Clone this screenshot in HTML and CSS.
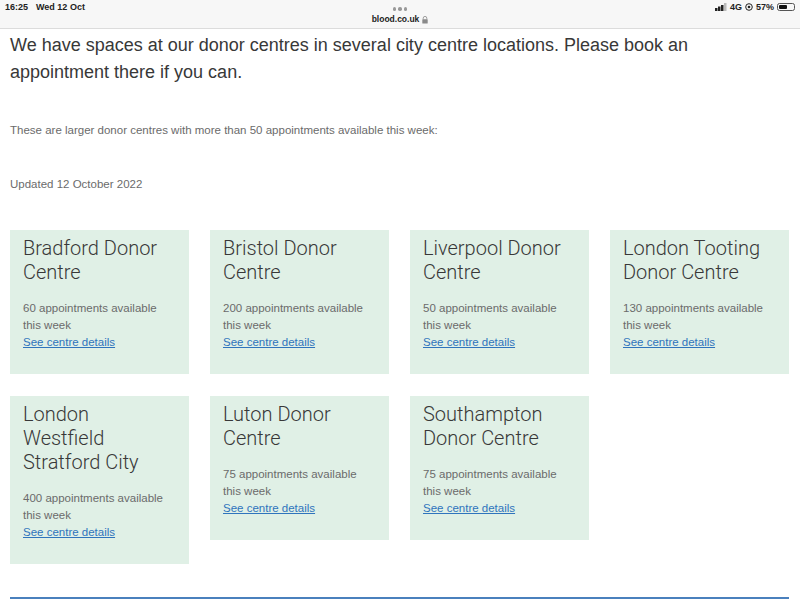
FILE: index.html
```html
<!DOCTYPE html>
<html lang="en">
<head>
<meta charset="utf-8">
<title>Donor centres</title>
<link rel="stylesheet" href="styles.css">
</head>
<body>
<header class="status">
  <div class="time"><span>16:25</span><span>Wed 12 Oct</span></div>
  <div class="address">
    <div class="dots"><i></i><i></i><i></i></div>
    <div class="url">blood.co.uk
      <svg class="lock" width="6" height="8" viewBox="0 0 6 8"><path d="M1.2 3.5V2.2a1.8 1.8 0 0 1 3.6 0v1.3" fill="none" stroke="#8a8a8a" stroke-width=".8"/><rect x=".3" y="3.3" width="5.4" height="4.2" rx=".6" fill="#8a8a8a"/></svg>
    </div>
  </div>
  <div class="system">
    <svg width="12" height="8" viewBox="0 0 12 8"><rect x="0" y="5" width="2.500" height="3" fill="#222"/><rect x="3" y="3.500" width="2.500" height="4.500" fill="#222"/><rect x="6" y="2" width="2.500" height="6" fill="#222"/><rect x="9" y="0" width="2.500" height="8" fill="#bbb"/></svg>
    <span>4G</span>
    <svg width="8" height="8" viewBox="0 0 8 8"><circle cx="4" cy="4" r="3.300" fill="none" stroke="#222"/><circle cx="4" cy="4" r="1.300" fill="#222"/></svg>
    <span>57%</span>
    <span class="battery"><span class="charge"></span></span>
  </div>
</header>
<main class="page">
  <p class="lead">We have spaces at our donor centres in several city centre locations. Please book an appointment there if you can.</p>
  <p class="note first">These are larger donor centres with more than 50 appointments available this week:</p>
  <p class="note second">Updated 12 October 2022</p>
  <section class="grid">
    <article class="card"><h2>Bradford Donor Centre</h2><p>60 appointments available this week<br><a href="#">See centre details</a></p></article>
    <article class="card"><h2>Bristol Donor Centre</h2><p>200 appointments available this week<br><a href="#">See centre details</a></p></article>
    <article class="card"><h2>Liverpool Donor Centre</h2><p>50 appointments available this week<br><a href="#">See centre details</a></p></article>
    <article class="card"><h2>London Tooting Donor Centre</h2><p>130 appointments available this week<br><a href="#">See centre details</a></p></article>
    <article class="card"><h2>London Westfield Stratford City</h2><p>400 appointments available this week<br><a href="#">See centre details</a></p></article>
    <article class="card"><h2>Luton Donor Centre</h2><p>75 appointments available this week<br><a href="#">See centre details</a></p></article>
    <article class="card"><h2>Southampton Donor Centre</h2><p>75 appointments available this week<br><a href="#">See centre details</a></p></article>
  </section>
  <hr class="rule">
</main>
</body>
</html>
```
FILE: styles.css
```css
* { box-sizing: border-box; }
html, body { margin: 0; height: 600px; overflow: hidden; background: #fff; }
body { font-family: "Liberation Sans", Arial, sans-serif; color: #333; }

.status {
  height: 29px;
  display: grid;
  grid-template-columns: 1fr auto 1fr;
  background: #f7f7f7;
  border-bottom: 1px solid #dcdcdc;
  padding: 0 5px 0 5px;
  font-size: 9px;
  font-weight: 700;
  color: #222;
}
.time { display: flex; gap: 8px; padding-top: 2px; line-height: 10px; }
.address { display: flex; flex-direction: column; align-items: center; padding-top: 7px; }
.dots { display: flex; gap: 2px; height: 5px; }
.dots i { width: 3.500px; height: 3.500px; border-radius: 50%; background: #999; }
.url { display: flex; align-items: center; gap: 3px; line-height: 11px; margin-top: 2px; font-size: 8.500px; }
.system { display: flex; justify-content: flex-end; align-items: flex-start; gap: 3px; padding-top: 2px; line-height: 10px; }
.system svg { margin-top: 1px; }
.battery { width: 18px; height: 8px; margin-top: 1px; border: 1px solid #555; border-radius: 2.500px; padding: 1px; display: block; }
.charge { display: block; width: 55%; height: 100%; background: #111; border-radius: 1px; }

.page { padding: 0 11.500px 0 10px; }
.lead { margin: 3px 0 0; font-size: 18px; line-height: 27px; color: #383838; }
.note { margin: 0; font-size: 11.500px; line-height: 17px; color: #6b6b6b; }
.first { margin-top: 36px; }
.second { margin-top: 37px; }

.grid {
  display: grid;
  grid-template-columns: repeat(4, 178.500px);
  justify-content: space-between;
  align-items: start;
  row-gap: 22px;
  margin-top: 37px;
}
.card { background: #e0f0e6; padding: 6px 18px 23px 13px; }
.card h2 { margin: 0; font-family: Roboto, sans-serif; font-weight: 300; font-size: 20px; line-height: 24px; color: #383838; }
.card p { margin: 16px 0 0; font-size: 11.500px; line-height: 17px; color: #6b6b6b; }
.card a { color: #2f74bd; }
.rule { margin: 33px 0 0; border: 0; border-top: 2px solid #4a80bd; }
```
